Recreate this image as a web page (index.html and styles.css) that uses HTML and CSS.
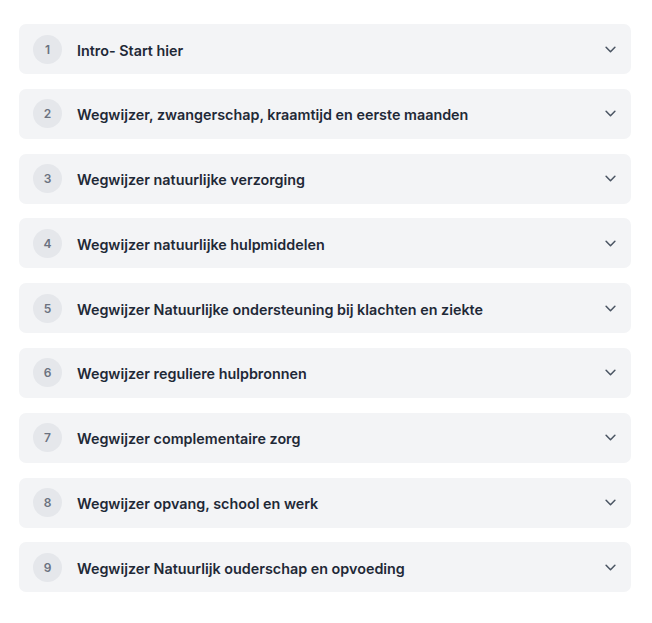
FILE: index.html
```html
<!DOCTYPE html>
<html lang="nl">
<head>
<meta charset="utf-8">
<link rel="stylesheet" href="styles.css">
</head>
<body>
<div class="list">
  <div class="item"><span class="num">1</span><span class="title">Intro- Start hier</span><svg class="chev" viewBox="0 0 10 6"><path d="M1 1l4 4 4-4"/></svg></div>
  <div class="item"><span class="num">2</span><span class="title">Wegwijzer, zwangerschap, kraamtijd en eerste maanden</span><svg class="chev" viewBox="0 0 10 6"><path d="M1 1l4 4 4-4"/></svg></div>
  <div class="item"><span class="num">3</span><span class="title">Wegwijzer natuurlijke verzorging</span><svg class="chev" viewBox="0 0 10 6"><path d="M1 1l4 4 4-4"/></svg></div>
  <div class="item"><span class="num">4</span><span class="title">Wegwijzer natuurlijke hulpmiddelen</span><svg class="chev" viewBox="0 0 10 6"><path d="M1 1l4 4 4-4"/></svg></div>
  <div class="item"><span class="num">5</span><span class="title">Wegwijzer Natuurlijke ondersteuning bij klachten en ziekte</span><svg class="chev" viewBox="0 0 10 6"><path d="M1 1l4 4 4-4"/></svg></div>
  <div class="item"><span class="num">6</span><span class="title">Wegwijzer reguliere hulpbronnen</span><svg class="chev" viewBox="0 0 10 6"><path d="M1 1l4 4 4-4"/></svg></div>
  <div class="item"><span class="num">7</span><span class="title">Wegwijzer complementaire zorg</span><svg class="chev" viewBox="0 0 10 6"><path d="M1 1l4 4 4-4"/></svg></div>
  <div class="item"><span class="num">8</span><span class="title">Wegwijzer opvang, school en werk</span><svg class="chev" viewBox="0 0 10 6"><path d="M1 1l4 4 4-4"/></svg></div>
  <div class="item"><span class="num">9</span><span class="title">Wegwijzer Natuurlijk ouderschap en opvoeding</span><svg class="chev" viewBox="0 0 10 6"><path d="M1 1l4 4 4-4"/></svg></div>
</div>
</body>
</html>
```
FILE: styles.css
```css
html, body {
  margin: 0;
  padding: 0;
  background: #ffffff;
}
body {
  font-family: Inter, "Noto Sans", sans-serif;
}
.list {
  display: flex;
  flex-direction: column;
  gap: 14.8px;
  padding: 24px 21px 30px 19px;
}
.item {
  display: flex;
  align-items: center;
  height: 50px;
  box-sizing: border-box;
  padding: 0 15px 0 14px;
  background: #f3f4f6;
  border-radius: 7px;
}
.num {
  flex: none;
  width: 29px;
  height: 29px;
  border-radius: 50%;
  background: #e5e7eb;
  color: #6b7280;
  font-size: 12px;
  font-weight: 600;
  display: flex;
  align-items: center;
  justify-content: center;
}
.title {
  flex: 1;
  margin-left: 15px;
  padding-top: 2px;
  font-size: 14.35px;
  font-weight: 600;
  color: #1f2937;
}
.chev {
  flex: none;
  width: 11px;
  height: 7px;
  fill: none;
  stroke: #4b5563;
  stroke-width: 1.4;
  stroke-linecap: round;
  stroke-linejoin: round;
}
```
